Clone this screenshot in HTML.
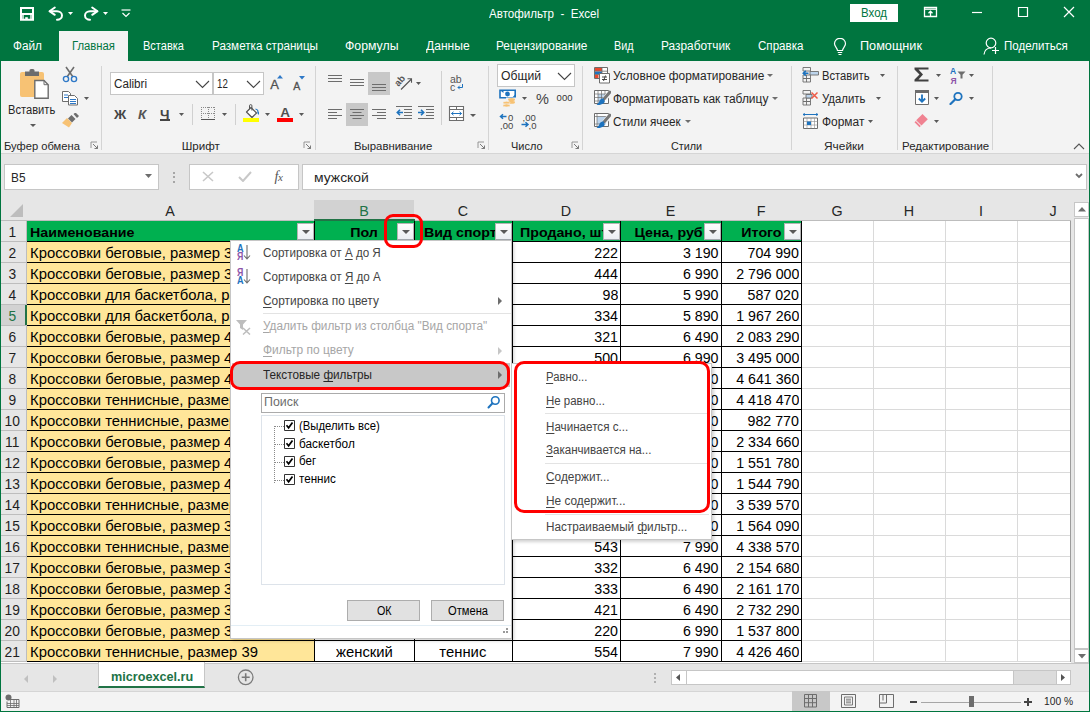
<!DOCTYPE html><html><head><meta charset="utf-8"><title>Excel</title><style>
*{margin:0;padding:0;box-sizing:border-box}
body{width:1090px;height:712px;overflow:hidden;position:relative;background:#fff;font-family:"Liberation Sans",sans-serif;color:#262626}
.a{position:absolute}
.t{position:absolute;white-space:nowrap}
.sep{position:absolute;top:66px;width:1px;height:84px;background:#d4d4d4}
.ch{position:absolute;top:200px;height:21px;background:#e6e6e6;border-right:1px solid #bdbdbd;border-bottom:1px solid #bdbdbd}
.rh{position:absolute;left:1px;width:26px;height:21px;background:#e6e6e6;border-right:1px solid #bdbdbd;border-bottom:1px solid #bdbdbd}
.cell{position:absolute;height:21px;font-size:13.8px;line-height:21px;white-space:nowrap;overflow:hidden;color:#000}
.sl{display:inline-block;transform:scaleX(1.075);transform-origin:0 50%}
.sr{display:inline-block;transform:scaleX(1.03);transform-origin:100% 50%}
.sb{display:inline-block;transform:scaleX(1.07);transform-origin:0 50%;font-size:13.3px}
.sbr{display:inline-block;transform:scaleX(1.07);transform-origin:100% 50%;font-size:13.3px}
u{text-decoration:underline;text-underline-offset:2px;text-decoration-thickness:1px}
</style></head><body>
<div class="a" style="left:0;top:0;width:1090px;height:61px;background:#00753f"></div>
<div class="t" style="left:489.30px;top:8.09px;font-size:12.3px;line-height:12.3px;color:#fff;transform:scaleX(0.9431);transform-origin:0 0;">Автофильтр&nbsp;&nbsp;-&nbsp;&nbsp;Excel</div>
<div class="a" style="left:850px;top:4px;width:48px;height:18px;background:#fff"></div>
<div class="t" style="left:860.90px;top:7.49px;font-size:12.3px;line-height:12.3px;color:#00753f;transform:scaleX(0.9345);transform-origin:0 0;">Вход</div>
<svg class="a" style="left:19px;top:6px" width="16" height="16" viewBox="0 0 16 16"><path d="M2 2H14V13.7H2Z" fill="none" stroke="#fff" stroke-width="2"/><rect x="2" y="7" width="12" height="2" fill="#fff"/><path d="M4 9V13M12 9V13" stroke="#fff" stroke-width="1.4"/><rect x="6.2" y="11.2" width="2.6" height="2.5" fill="#fff"/></svg><svg class="a" style="left:47px;top:5px" width="18" height="17" viewBox="0 0 18 17"><g fill="none" stroke="#fff" stroke-width="2" stroke-linecap="round" stroke-linejoin="round"><path d="M7.8 2.5L2.5 6.2L7.8 9.8"/><path d="M3 6.2H10A5 4.3 0 0 1 10 14.8"/></g></svg><svg class="a" style="left:68px;top:12px" width="5" height="3" viewBox="0 0 5 3"><path d="M0 0H5L2.5 3Z" fill="#fff"/></svg><svg class="a" style="left:82px;top:5px" width="18" height="17" viewBox="0 0 18 17"><g fill="none" stroke="#fff" stroke-width="2" stroke-linecap="round" stroke-linejoin="round"><path d="M10.2 2.5L15.5 6.2L10.2 9.8"/><path d="M15 6.2H8A5 4.3 0 0 0 8 14.8"/></g></svg><svg class="a" style="left:103px;top:12px" width="5" height="3" viewBox="0 0 5 3"><path d="M0 0H5L2.5 3Z" fill="#fff"/></svg><svg class="a" style="left:120px;top:8px" width="12" height="10" viewBox="0 0 12 10"><path d="M1.5 2H10.5" stroke="#fff" stroke-width="1.2"/><path d="M2.5 5L6 8.5L9.5 5" fill="none" stroke="#fff" stroke-width="1.2"/></svg><svg class="a" style="left:923px;top:6px" width="15" height="12" viewBox="0 0 15 12"><g fill="none" stroke="#fff" stroke-width="1.3"><path d="M1.5 1.5H13.5V10.5H1.5Z"/><path d="M1.5 3.2H13.5"/><path d="M7.5 10V5.2M5.5 7.2L7.5 5.2L9.5 7.2"/></g></svg><svg class="a" style="left:971px;top:11px" width="12" height="3" viewBox="0 0 12 3"><path d="M1 1.5H11" stroke="#fff" stroke-width="1.2"/></svg><svg class="a" style="left:1017px;top:6px" width="12" height="12" viewBox="0 0 12 12"><path d="M1.5 1.5H10.5V10.5H1.5Z" fill="none" stroke="#fff" stroke-width="1.2"/></svg><svg class="a" style="left:1063px;top:6px" width="12" height="12" viewBox="0 0 12 12"><path d="M1 1L11 11M11 1L1 11" stroke="#fff" stroke-width="1.2"/></svg><svg class="a" style="left:832px;top:38px" width="16" height="18" viewBox="0 0 16 18"><g fill="none" stroke="#fff" stroke-width="1.2"><path d="M5.5 12.5C5.5 10 2.5 8.5 2.5 5.8A5.5 5.5 0 0 1 13.5 5.8C13.5 8.5 10.5 10 10.5 12.5Z"/><path d="M5.8 14.5H10.2M6.5 16.5H9.5"/></g></svg><svg class="a" style="left:983px;top:37px" width="18" height="19" viewBox="0 0 18 19"><g fill="none" stroke="#fff" stroke-width="1.2"><circle cx="8" cy="6" r="4.8"/><path d="M1 17.5C1.5 13.5 4 11 8 11"/><path d="M12.5 10V17M9 13.5H16"/></g></svg>
<div class="a" style="left:59px;top:31px;width:69px;height:30px;background:#f3f3f3"></div>
<div class="t" style="left:71.50px;top:39.99px;font-size:12.3px;line-height:12.3px;color:#00753f;transform:scaleX(0.9185);transform-origin:0 0;">Главная</div>
<div class="t" style="left:13.00px;top:39.99px;font-size:12.3px;line-height:12.3px;color:#fff;transform:scaleX(0.9588);transform-origin:0 0;">Файл</div>
<div class="t" style="left:142.50px;top:39.99px;font-size:12.3px;line-height:12.3px;color:#fff;transform:scaleX(0.8965);transform-origin:0 0;">Вставка</div>
<div class="t" style="left:211.50px;top:39.99px;font-size:12.3px;line-height:12.3px;color:#fff;transform:scaleX(0.9499);transform-origin:0 0;">Разметка страницы</div>
<div class="t" style="left:345.00px;top:39.99px;font-size:12.3px;line-height:12.3px;color:#fff;">Формулы</div>
<div class="t" style="left:425.80px;top:39.99px;font-size:12.3px;line-height:12.3px;color:#fff;transform:scaleX(0.9811);transform-origin:0 0;">Данные</div>
<div class="t" style="left:496.30px;top:39.99px;font-size:12.3px;line-height:12.3px;color:#fff;transform:scaleX(0.9623);transform-origin:0 0;">Рецензирование</div>
<div class="t" style="left:614.30px;top:39.99px;font-size:12.3px;line-height:12.3px;color:#fff;transform:scaleX(0.8809);transform-origin:0 0;">Вид</div>
<div class="t" style="left:661.30px;top:39.99px;font-size:12.3px;line-height:12.3px;color:#fff;transform:scaleX(0.9652);transform-origin:0 0;">Разработчик</div>
<div class="t" style="left:758.40px;top:39.99px;font-size:12.3px;line-height:12.3px;color:#fff;transform:scaleX(0.9427);transform-origin:0 0;">Справка</div>
<div class="t" style="left:859.60px;top:39.99px;font-size:12.3px;line-height:12.3px;color:#fff;transform:scaleX(1.0298);transform-origin:0 0;">Помощник</div>
<div class="t" style="left:1003.50px;top:39.99px;font-size:12.3px;line-height:12.3px;color:#fff;transform:scaleX(0.9379);transform-origin:0 0;">Поделиться</div>
<div class="a" style="left:0;top:61px;width:1090px;height:93px;background:#f3f3f3;border-bottom:1px solid #d5d5d5"></div>
<div class="sep" style="left:101px"></div>
<div class="sep" style="left:315px"></div>
<div class="sep" style="left:488px"></div>
<div class="sep" style="left:582px"></div>
<div class="sep" style="left:791px"></div>
<div class="sep" style="left:897px"></div>
<div class="sep" style="left:992px"></div>
<div class="t" style="left:3.50px;top:139.68px;font-size:11.6px;line-height:11.6px;color:#262626;transform:scaleX(0.9628);transform-origin:0 0;">Буфер обмена</div>
<div class="t" style="left:181.70px;top:139.68px;font-size:11.6px;line-height:11.6px;color:#262626;">Шрифт</div>
<div class="t" style="left:354.20px;top:139.68px;font-size:11.6px;line-height:11.6px;color:#262626;transform:scaleX(0.9807);transform-origin:0 0;">Выравнивание</div>
<div class="t" style="left:511.00px;top:139.68px;font-size:11.6px;line-height:11.6px;color:#262626;transform:scaleX(0.9442);transform-origin:0 0;">Число</div>
<div class="t" style="left:671.40px;top:139.68px;font-size:11.6px;line-height:11.6px;color:#262626;transform:scaleX(0.9306);transform-origin:0 0;">Стили</div>
<div class="t" style="left:823.90px;top:139.68px;font-size:11.6px;line-height:11.6px;color:#262626;transform:scaleX(1.0255);transform-origin:0 0;">Ячейки</div>
<div class="t" style="left:901.50px;top:139.68px;font-size:11.6px;line-height:11.6px;color:#262626;transform:scaleX(0.9868);transform-origin:0 0;">Редактирование</div>
<div class="t" style="left:8.40px;top:103.79px;font-size:12.3px;line-height:12.3px;color:#262626;transform:scaleX(0.9053);transform-origin:0 0;">Вставить</div>
<div class="a" style="left:110px;top:72px;width:103px;height:23px;background:#fff;border:1px solid #c6c6c6"></div>
<div class="a" style="left:213px;top:72px;width:51px;height:23px;background:#fff;border:1px solid #c6c6c6"></div>
<div class="t" style="left:113.70px;top:78.09px;font-size:12.3px;line-height:12.3px;color:#262626;transform:scaleX(0.9496);transform-origin:0 0;">Calibri</div>
<div class="t" style="left:217.00px;top:78.02px;font-size:12.5px;line-height:12.5px;color:#262626;transform:scaleX(0.7770);transform-origin:0 0;">12</div>
<div class="a" style="left:497px;top:64px;width:78px;height:23px;background:#fff;border:1px solid #c6c6c6"></div>
<div class="t" style="left:500.60px;top:70.39px;font-size:12.3px;line-height:12.3px;color:#262626;transform:scaleX(0.9882);transform-origin:0 0;">Общий</div>
<div class="t" style="left:613.30px;top:70.39px;font-size:12.3px;line-height:12.3px;color:#262626;transform:scaleX(0.9675);transform-origin:0 0;">Условное форматирование</div>
<div class="t" style="left:613.30px;top:93.39px;font-size:12.3px;line-height:12.3px;color:#262626;transform:scaleX(0.9710);transform-origin:0 0;">Форматировать как таблицу</div>
<div class="t" style="left:613.30px;top:116.39px;font-size:12.3px;line-height:12.3px;color:#262626;transform:scaleX(0.9513);transform-origin:0 0;">Стили ячеек</div>
<div class="t" style="left:822.20px;top:70.39px;font-size:12.3px;line-height:12.3px;color:#262626;transform:scaleX(0.9110);transform-origin:0 0;">Вставить</div>
<div class="t" style="left:822.20px;top:93.39px;font-size:12.3px;line-height:12.3px;color:#262626;transform:scaleX(0.9242);transform-origin:0 0;">Удалить</div>
<div class="t" style="left:822.20px;top:116.39px;font-size:12.3px;line-height:12.3px;color:#262626;transform:scaleX(0.9705);transform-origin:0 0;">Формат</div>
<div class="a" style="left:368px;top:72px;width:22px;height:23px;background:#c8c8c8"></div>
<div class="a" style="left:346px;top:103px;width:22px;height:23px;background:#c8c8c8"></div>
<svg class="a" style="left:19px;top:68px" width="30" height="32" viewBox="0 0 30 32"><rect x="1" y="4" width="24" height="25" rx="2" fill="#f7c274"/><path d="M6 3.5H20V8H6Z" fill="#6d6d6d"/><rect x="10.5" y="1" width="5" height="4" rx="1.5" fill="#6d6d6d"/><path d="M15.8 12.5H25L29.2 16.7V30.2H15.8Z" fill="#fff" stroke="#6d6d6d" stroke-width="1.4"/><path d="M25 12.5V16.7H29.2" fill="none" stroke="#6d6d6d" stroke-width="1"/></svg><svg class="a" style="left:30px;top:124px" width="6" height="3" viewBox="0 0 6 3"><path d="M0 0H6L3.0 3Z" fill="#595959"/></svg><svg class="a" style="left:62px;top:66px" width="16" height="17" viewBox="0 0 16 17"><path d="M4 1L11 11M12 1L5 11" stroke="#6d6d6d" stroke-width="1.6"/><circle cx="4" cy="13" r="2.6" fill="none" stroke="#2e78c7" stroke-width="1.4"/><circle cx="12" cy="13" r="2.6" fill="none" stroke="#2e78c7" stroke-width="1.4"/></svg><svg class="a" style="left:61px;top:90px" width="18" height="16" viewBox="0 0 18 16"><path d="M1.5 1.5H7.5L9.5 3.5V11.5H1.5Z" fill="#fff" stroke="#6d6d6d" stroke-width="1"/><path d="M3 5H7M3 7.5H7" stroke="#2e78c7" stroke-width="1"/><path d="M7.5 5.5H13.5L16.5 8.5V15H7.5Z" fill="#fff" stroke="#6d6d6d" stroke-width="1"/><path d="M9 9.5H15M9 11.5H15M9 13.5H15" stroke="#2e78c7" stroke-width="1"/></svg><svg class="a" style="left:84px;top:97px" width="5" height="3" viewBox="0 0 5 3"><path d="M0 0H5L2.5 3Z" fill="#595959"/></svg><svg class="a" style="left:61px;top:113px" width="18" height="16" viewBox="0 0 18 16"><path d="M1 10L6 5L11 10L8 14.5Z" fill="#f7c274"/><path d="M7 5.5L10.5 2L14.5 6L11 9.5Z" fill="#6d6d6d"/><path d="M12.5 1L14.5 -0.5L18 3L16 5Z" fill="#6d6d6d"/></svg><svg class="a" style="left:195px;top:80px" width="15" height="9" viewBox="0 0 15 9"><path d="M1 1L7.5 7.5L14 1" fill="none" stroke="#444" stroke-width="1.1"/></svg><svg class="a" style="left:246px;top:80px" width="15" height="9" viewBox="0 0 15 9"><path d="M1 1L7.5 7.5L14 1" fill="none" stroke="#444" stroke-width="1.1"/></svg><div class="t" style="left:270.3px;top:78.3px;font-size:13px;line-height:13px;color:#505050;-webkit-text-stroke:0.3px #505050">A</div><svg class="a" style="left:277px;top:75px" width="6" height="4" viewBox="0 0 6 4"><path d="M0 3.5H6L3 0Z" fill="#2e78c7"/></svg><div class="t" style="left:293.2px;top:80.5px;font-size:10.5px;line-height:10.5px;color:#505050;-webkit-text-stroke:0.3px #505050">A</div><svg class="a" style="left:299px;top:76px" width="6" height="4" viewBox="0 0 6 4"><path d="M0 0H6L3 3.5Z" fill="#2e78c7"/></svg><div class="t" style="left:114px;top:107px;font-size:13.5px;font-weight:bold;color:#444">Ж</div><div class="t" style="left:138px;top:107px;font-size:13.5px;font-weight:bold;font-style:italic;color:#555">К</div><div class="t" style="left:160px;top:107px;font-size:13.5px;font-weight:bold;color:#444">Ч</div><div class="a" style="left:160px;top:119px;width:10px;height:1.5px;background:#444"></div><svg class="a" style="left:179px;top:113px" width="5" height="3" viewBox="0 0 5 3"><path d="M0 0H5L2.5 3Z" fill="#595959"/></svg><div class="a" style="left:192px;top:104px;width:1px;height:21px;background:#d0d0d0"></div><svg class="a" style="left:200px;top:106px" width="16" height="15" viewBox="0 0 16 15"><g shape-rendering="crispEdges"><path d="M1.5 1V13M8 1V13M14.5 1V13M1 1.5H15M1 7.5H15" stroke="#8a8a8a" stroke-width="1" stroke-dasharray="1 1"/><path d="M1 13.5H15" stroke="#555" stroke-width="1"/></g></svg><svg class="a" style="left:222px;top:113px" width="5" height="3" viewBox="0 0 5 3"><path d="M0 0H5L2.5 3Z" fill="#595959"/></svg><div class="a" style="left:235px;top:104px;width:1px;height:21px;background:#d0d0d0"></div><svg class="a" style="left:243px;top:104px" width="18" height="14" viewBox="0 0 18 14"><path d="M8 3.5L13.5 9L9 13.5L3.5 8Z" fill="#fff" stroke="#555" stroke-width="1.2" stroke-linejoin="round"/><path d="M6.5 5V1.8A1.2 1.2 0 0 1 8.9 1.8V6.5" fill="none" stroke="#555" stroke-width="1"/><path d="M14.5 6.5C16 7.5 16.5 9 15.5 11C14.5 9.5 14 8 14.5 6.5Z" fill="#1e73be"/><path d="M12.5 5C14 5.3 14.8 6 15 7" fill="none" stroke="#1e73be" stroke-width="1.2"/></svg><div class="a" style="left:243px;top:118px;width:16px;height:3.5px;background:#ffff00"></div><svg class="a" style="left:265px;top:113px" width="5" height="3" viewBox="0 0 5 3"><path d="M0 0H5L2.5 3Z" fill="#595959"/></svg><div class="t" style="left:280.3px;top:106.2px;font-size:13.5px;line-height:13.5px;font-weight:bold;color:#505050">A</div><div class="a" style="left:277px;top:118px;width:16px;height:3.5px;background:#ff0000"></div><svg class="a" style="left:299px;top:113px" width="5" height="3" viewBox="0 0 5 3"><path d="M0 0H5L2.5 3Z" fill="#595959"/></svg><svg class="a" style="left:328px;top:75px" width="14" height="11" viewBox="0 0 14 11"><rect x="0" y="0" width="14" height="1" fill="#6d6d6d"/><rect x="0" y="3" width="14" height="1" fill="#6d6d6d"/><rect x="0" y="6" width="14" height="1" fill="#6d6d6d"/></svg><svg class="a" style="left:350px;top:79px" width="14" height="11" viewBox="0 0 14 11"><rect x="0" y="0" width="14" height="1" fill="#6d6d6d"/><rect x="0" y="3" width="14" height="1" fill="#6d6d6d"/><rect x="0" y="6" width="14" height="1" fill="#6d6d6d"/></svg><svg class="a" style="left:372px;top:84px" width="14" height="11" viewBox="0 0 14 11"><rect x="0" y="0" width="14" height="1" fill="#6d6d6d"/><rect x="0" y="3" width="14" height="1" fill="#6d6d6d"/><rect x="0" y="6" width="14" height="1" fill="#6d6d6d"/></svg><svg class="a" style="left:328px;top:109px" width="14" height="14" viewBox="0 0 14 14"><rect x="0" y="0" width="14" height="1" fill="#6d6d6d"/><rect x="0" y="3" width="9" height="1" fill="#6d6d6d"/><rect x="0" y="6" width="14" height="1" fill="#6d6d6d"/><rect x="0" y="9" width="9" height="1" fill="#6d6d6d"/></svg><svg class="a" style="left:350px;top:109px" width="14" height="14" viewBox="0 0 14 14"><rect x="0.0" y="0" width="14" height="1" fill="#6d6d6d"/><rect x="2.5" y="3" width="9" height="1" fill="#6d6d6d"/><rect x="0.0" y="6" width="14" height="1" fill="#6d6d6d"/><rect x="2.5" y="9" width="9" height="1" fill="#6d6d6d"/></svg><svg class="a" style="left:372px;top:109px" width="14" height="14" viewBox="0 0 14 14"><rect x="0" y="0" width="14" height="1" fill="#6d6d6d"/><rect x="5" y="3" width="9" height="1" fill="#6d6d6d"/><rect x="0" y="6" width="14" height="1" fill="#6d6d6d"/><rect x="5" y="9" width="9" height="1" fill="#6d6d6d"/></svg><svg class="a" style="left:395px;top:74px" width="19" height="17" viewBox="0 0 19 17"><text x="0" y="0" font-size="9.5" font-weight="bold" font-family="Liberation Sans" fill="#555" transform="translate(3.5 13) rotate(-50)">ab</text><path d="M6 15.5L16 5.5M12.5 4.8H16.5V8.8" fill="none" stroke="#555" stroke-width="1.1"/></svg><svg class="a" style="left:416px;top:82px" width="5" height="3" viewBox="0 0 5 3"><path d="M0 0H5L2.5 3Z" fill="#595959"/></svg><svg class="a" style="left:396px;top:106px" width="17" height="14" viewBox="0 0 17 14"><rect x="0" y="0" width="16" height="1" fill="#6d6d6d"/><rect x="8" y="3" width="8" height="1" fill="#6d6d6d"/><rect x="8" y="6" width="8" height="1" fill="#6d6d6d"/><rect x="8" y="9" width="8" height="1" fill="#6d6d6d"/><rect x="0" y="12" width="16" height="1" fill="#6d6d6d"/><path d="M7 6.5H1.5M4 3.8L1.3 6.5L4 9.2" fill="none" stroke="#1e73be" stroke-width="1.6"/></svg><svg class="a" style="left:418px;top:106px" width="17" height="14" viewBox="0 0 17 14"><rect x="0" y="0" width="16" height="1" fill="#6d6d6d"/><rect x="8" y="3" width="8" height="1" fill="#6d6d6d"/><rect x="8" y="6" width="8" height="1" fill="#6d6d6d"/><rect x="8" y="9" width="8" height="1" fill="#6d6d6d"/><rect x="0" y="12" width="16" height="1" fill="#6d6d6d"/><path d="M0 6.5H5.5M3 3.8L5.7 6.5L3 9.2" fill="none" stroke="#1e73be" stroke-width="1.6"/></svg><div class="a" style="left:441px;top:71px;width:1px;height:54px;background:#d0d0d0"></div><div class="t" style="left:450px;top:75px;font-size:10.5px;color:#555;line-height:8px">ab<br>c</div><svg class="a" style="left:457px;top:84px" width="7" height="6" viewBox="0 0 7 6"><path d="M5.5 0V3.5H1M2.8 1.7L1 3.5L2.8 5.3" fill="none" stroke="#1e73be" stroke-width="1"/></svg><svg class="a" style="left:448px;top:105px" width="17" height="17" viewBox="0 0 17 17"><path d="M1.5 1.5H15.5V15.5H1.5Z" fill="#fff" stroke="#6d6d6d" stroke-width="1.1"/><path d="M1.5 4.5H15.5M1.5 12.5H15.5M8.5 1.5V4.5M8.5 12.5V15.5" stroke="#6d6d6d" stroke-width="1"/><path d="M3.5 8.5H13.5M5.5 6.8L3.5 8.5L5.5 10.2M11.5 6.8L13.5 8.5L11.5 10.2" fill="none" stroke="#1e73be" stroke-width="1"/></svg><svg class="a" style="left:470px;top:114px" width="6" height="3" viewBox="0 0 6 3"><path d="M0 0H6L3.0 3Z" fill="#595959"/></svg><svg class="a" style="left:557px;top:72px" width="15" height="9" viewBox="0 0 15 9"><path d="M1 1L7.5 7.5L14 1" fill="none" stroke="#444" stroke-width="1.1"/></svg><svg class="a" style="left:499px;top:89px" width="18" height="18" viewBox="0 0 18 18"><path d="M1 1.2H16.2V8.8H1Z" fill="#fff" stroke="#1e73be" stroke-width="1.6"/><path d="M1 1.2H4.5V4M16.2 5.5V8.8H13" fill="#1e73be"/><circle cx="8.5" cy="5" r="2.4" fill="#1e73be"/><rect x="7" y="8.5" width="10" height="9" fill="#f3f3f3"/><ellipse cx="12.5" cy="10.5" rx="3.5" ry="1.5" fill="#f7c274"/><ellipse cx="12.5" cy="13.2" rx="3.5" ry="1.5" fill="#f7c274"/><ellipse cx="7.5" cy="13.8" rx="3.5" ry="1.5" fill="#f7c274" stroke="#f3f3f3" stroke-width="0.6"/><ellipse cx="7.5" cy="16.4" rx="3.5" ry="1.5" fill="#f7c274" stroke="#f3f3f3" stroke-width="0.6"/></svg><svg class="a" style="left:522px;top:97px" width="5" height="3" viewBox="0 0 5 3"><path d="M0 0H5L2.5 3Z" fill="#595959"/></svg><div class="t" style="left:536px;top:92px;font-size:14.5px;line-height:14.5px;color:#444">%</div><div class="t" style="left:556.5px;top:93px;font-size:9.5px;line-height:9.5px;color:#333;letter-spacing:0.1px">000</div><svg class="a" style="left:499px;top:112px" width="18" height="18" viewBox="0 0 18 18"><path d="M7.5 4.5H1.8M4 2.2L1.5 4.5L4 6.8" fill="none" stroke="#1e73be" stroke-width="1.5"/><text x="9" y="8.8" font-size="9.5" font-family="Liberation Sans" fill="#444">0</text><text x="1" y="16.5" font-size="9.5" font-family="Liberation Sans" fill="#444">,00</text></svg><svg class="a" style="left:521px;top:112px" width="18" height="18" viewBox="0 0 18 18"><text x="1.5" y="8.8" font-size="9.5" font-family="Liberation Sans" fill="#444">,00</text><path d="M0.5 12.5H6.8M4.5 10.2L7 12.5L4.5 14.8" fill="none" stroke="#1e73be" stroke-width="1.5"/><text x="7.5" y="16.5" font-size="9.5" font-family="Liberation Sans" fill="#444">,0</text></svg><svg class="a" style="left:593px;top:66px" width="18" height="18" viewBox="0 0 18 18"><path d="M1.5 1.5H14.5V12.5H1.5Z" fill="#fff" stroke="#6d6d6d" stroke-width="1"/><rect x="2" y="2" width="7" height="3.2" fill="#e8492e"/><rect x="2" y="5.5" width="7" height="2.8" fill="#1e73be"/><rect x="2" y="8.5" width="3.5" height="3.5" fill="#e8492e"/><path d="M9 1.5V12.5M1.5 5.2H14.5M1.5 8.5H14.5" stroke="#6d6d6d" stroke-width="0.8"/><path d="M6.5 7.5H16.5V17H6.5Z" fill="#fff" stroke="#6d6d6d" stroke-width="1"/><path d="M9 11H14M9 13.5H14M12.5 9.5L10.5 15" stroke="#333" stroke-width="0.9"/></svg><svg class="a" style="left:593px;top:89px" width="18" height="17" viewBox="0 0 18 17"><path d="M1.5 1.5H15.5V14.5H1.5Z" fill="#fff" stroke="#6d6d6d" stroke-width="1"/><rect x="5" y="5" width="7" height="7" fill="#bcd4ec"/><path d="M1.5 5H15.5M1.5 8.5H15.5M1.5 12H12M5 1.5V14.5M8.5 1.5V12M12 1.5V8" stroke="#6d6d6d" stroke-width="0.7"/><path d="M17 3.5L11.5 10" stroke="#f3f3f3" stroke-width="5"/><path d="M16.8 3.2L11.2 9.8" stroke="#777" stroke-width="3" stroke-linecap="round"/><path d="M10.5 9.3C8 9.5 7 11 6.3 12.5C5.5 14 4.5 15.2 3.5 16C6.5 16.3 10 15.5 11.8 13Z" fill="#1e73be"/></svg><svg class="a" style="left:593px;top:112px" width="18" height="17" viewBox="0 0 18 17"><path d="M1.5 1.5H15.5V14.5H1.5Z" fill="#fff" stroke="#6d6d6d" stroke-width="1"/><rect x="4" y="4.5" width="9" height="8" fill="#bcd4ec"/><path d="M1.5 4.5H15.5M4 1.5V14.5M1.5 12H10" stroke="#6d6d6d" stroke-width="0.7"/><path d="M17 3.5L11.5 10" stroke="#f3f3f3" stroke-width="5"/><path d="M16.8 3.2L11.2 9.8" stroke="#777" stroke-width="3" stroke-linecap="round"/><path d="M10.5 9.3C8 9.5 7 11 6.3 12.5C5.5 14 4.5 15.2 3.5 16C6.5 16.3 10 15.5 11.8 13Z" fill="#1e73be"/></svg><svg class="a" style="left:767px;top:74px" width="6" height="4" viewBox="0 0 6 4"><path d="M0 0H6L3 3Z" fill="#6d6d6d"/></svg><svg class="a" style="left:772px;top:97px" width="6" height="4" viewBox="0 0 6 4"><path d="M0 0H6L3 3Z" fill="#6d6d6d"/></svg><svg class="a" style="left:685px;top:120px" width="6" height="4" viewBox="0 0 6 4"><path d="M0 0H6L3 3Z" fill="#6d6d6d"/></svg><svg class="a" style="left:802px;top:66px" width="18" height="18" viewBox="0 0 18 18"><path d="M1 1.5H8.5V5H1ZM1 9H8.5V12.5H1ZM1 12.5H8.5V16H1ZM4.5 9V16" fill="none" stroke="#6d6d6d" stroke-width="0.9"/><path d="M8 5.5H16.5V9H8Z" fill="#bcd4ec" stroke="#6d6d6d" stroke-width="0.9"/><path d="M6.5 7.2H1.5M3.8 4.8L1.3 7.2L3.8 9.6" fill="none" stroke="#1e73be" stroke-width="1.6"/></svg><svg class="a" style="left:880px;top:74px" width="5" height="3" viewBox="0 0 5 3"><path d="M0 0H5L2.5 3Z" fill="#595959"/></svg><svg class="a" style="left:802px;top:89px" width="18" height="18" viewBox="0 0 18 18"><path d="M1 1.5H8.5V5H1ZM1 9H8.5V12.5H1ZM1 12.5H8.5V16H1ZM4.5 9V16" fill="none" stroke="#6d6d6d" stroke-width="0.9"/><path d="M4 5.5H10V9H4Z" fill="#bcd4ec" stroke="#6d6d6d" stroke-width="0.9"/><path d="M9.5 3.5L15.5 9.5M15.5 3.5L9.5 9.5" stroke="#ee5a47" stroke-width="1.5"/></svg><svg class="a" style="left:876px;top:97px" width="5" height="3" viewBox="0 0 5 3"><path d="M0 0H5L2.5 3Z" fill="#595959"/></svg><svg class="a" style="left:802px;top:112px" width="18" height="18" viewBox="0 0 18 18"><path d="M1 2.5H16M2.2 1V4M14.8 1V4" stroke="#1e73be" stroke-width="1"/><path d="M3.8 2.5L2 2.5" stroke="#1e73be"/><path d="M1.5 6H15.5V16.5H1.5Z" fill="#fff" stroke="#6d6d6d" stroke-width="1"/><path d="M1.5 9.5H15.5M1.5 13H15.5M5 6V16.5M9 6V16.5M12.5 6V16.5" stroke="#8d8d8d" stroke-width="0.6"/><rect x="5" y="9.5" width="4" height="3.5" fill="#1e73be"/></svg><svg class="a" style="left:868px;top:120px" width="5" height="3" viewBox="0 0 5 3"><path d="M0 0H5L2.5 3Z" fill="#595959"/></svg><svg class="a" style="left:913px;top:66px" width="18" height="17" viewBox="0 0 18 17"><path d="M1.5 1.5H15.5V3.5H5.5L10 8.5L5.5 13.5H15.5V15.5H1.5V13.5L6.5 8.5L1.5 3.5Z" fill="#404040"/></svg><svg class="a" style="left:936px;top:74px" width="5" height="3" viewBox="0 0 5 3"><path d="M0 0H5L2.5 3Z" fill="#595959"/></svg><div class="t" style="left:950px;top:66px;font-size:8.5px;font-weight:bold;color:#1e73be">A</div><div class="t" style="left:950.5px;top:75.5px;font-size:8.5px;font-weight:bold;color:#8c54a8">Я</div><svg class="a" style="left:957px;top:71px" width="9" height="8" viewBox="0 0 9 8"><path d="M0.5 0.5H8.5L5.5 3.8V7.5H3.5V3.8Z" fill="#6d6d6d"/></svg><svg class="a" style="left:969px;top:74px" width="5" height="3" viewBox="0 0 5 3"><path d="M0 0H5L2.5 3Z" fill="#595959"/></svg><svg class="a" style="left:914px;top:89px" width="16" height="17" viewBox="0 0 16 17"><path d="M1.5 1.5H14.5V15.5H1.5Z" fill="#fff" stroke="#6d6d6d" stroke-width="1"/><rect x="1" y="1" width="14" height="3" fill="#6d6d6d"/><path d="M8 5.5V13M4.8 9.5L8 12.7L11.2 9.5" fill="none" stroke="#1e73be" stroke-width="1.8"/></svg><svg class="a" style="left:934px;top:97px" width="5" height="3" viewBox="0 0 5 3"><path d="M0 0H5L2.5 3Z" fill="#595959"/></svg><svg class="a" style="left:949px;top:91px" width="15" height="14" viewBox="0 0 15 14"><circle cx="9" cy="5.5" r="3.7" fill="none" stroke="#1e73be" stroke-width="1.8"/><path d="M6.3 8.2L1.5 13" stroke="#1e73be" stroke-width="2.2" stroke-linecap="round"/></svg><svg class="a" style="left:969px;top:97px" width="5" height="3" viewBox="0 0 5 3"><path d="M0 0H5L2.5 3Z" fill="#595959"/></svg><svg class="a" style="left:914px;top:113px" width="15" height="15" viewBox="0 0 15 15"><path d="M8.5 1L13.8 6.3L7.5 12.6L2.2 7.3Z" fill="#f08291"/><path d="M1.8 8L6.8 13L5.5 14.3L0.5 9.3Z" fill="#f08291"/></svg><svg class="a" style="left:934px;top:120px" width="5" height="3" viewBox="0 0 5 3"><path d="M0 0H5L2.5 3Z" fill="#595959"/></svg><svg class="a" style="left:1073px;top:143px" width="12" height="7" viewBox="0 0 12 7"><path d="M1 6L6 1L11 6" fill="none" stroke="#555" stroke-width="1.1"/></svg><svg class="a" style="left:90px;top:141px" width="9" height="9" viewBox="0 0 9 9"><path d="M1 7V1H7" fill="none" stroke="#8d8d8d" stroke-width="0.9"/><path d="M3 3L7.5 7.5M4.5 7.5H7.5V4.5" fill="none" stroke="#6d6d6d" stroke-width="0.9"/></svg><svg class="a" style="left:303px;top:141px" width="9" height="9" viewBox="0 0 9 9"><path d="M1 7V1H7" fill="none" stroke="#8d8d8d" stroke-width="0.9"/><path d="M3 3L7.5 7.5M4.5 7.5H7.5V4.5" fill="none" stroke="#6d6d6d" stroke-width="0.9"/></svg><svg class="a" style="left:477px;top:141px" width="9" height="9" viewBox="0 0 9 9"><path d="M1 7V1H7" fill="none" stroke="#8d8d8d" stroke-width="0.9"/><path d="M3 3L7.5 7.5M4.5 7.5H7.5V4.5" fill="none" stroke="#6d6d6d" stroke-width="0.9"/></svg><svg class="a" style="left:571px;top:141px" width="9" height="9" viewBox="0 0 9 9"><path d="M1 7V1H7" fill="none" stroke="#8d8d8d" stroke-width="0.9"/><path d="M3 3L7.5 7.5M4.5 7.5H7.5V4.5" fill="none" stroke="#6d6d6d" stroke-width="0.9"/></svg>
<div class="a" style="left:0;top:154px;width:1090px;height:46px;background:#e6e6e6"></div>
<div class="a" style="left:4px;top:164px;width:155px;height:26px;background:#fff;border:1px solid #c6c6c6"></div>
<div class="t" style="left:10.50px;top:171.72px;font-size:12.5px;line-height:12.5px;color:#262626;transform:scaleX(0.9485);transform-origin:0 0;">B5</div>
<svg class="a" style="left:145px;top:174px" width="7" height="4" viewBox="0 0 7 4"><path d="M0 0H7L3.5 4Z" fill="#6d6d6d"/></svg>
<div class="a" style="left:173px;top:172px;width:2px;height:2px;background:#a6a6a6"></div>
<div class="a" style="left:173px;top:176.3px;width:2px;height:2px;background:#a6a6a6"></div>
<div class="a" style="left:173px;top:180.6px;width:2px;height:2px;background:#a6a6a6"></div>
<div class="a" style="left:189px;top:164px;width:110px;height:26px;background:#fff;border:1px solid #c6c6c6"></div>
<svg class="a" style="left:202px;top:171px" width="12" height="11" viewBox="0 0 12 11"><path d="M1 1L11 10M11 1L1 10" stroke="#c8c8c8" stroke-width="1.6"/></svg>
<svg class="a" style="left:238px;top:171px" width="14" height="11" viewBox="0 0 14 11"><path d="M1 6L5 10L13 1" fill="none" stroke="#c8c8c8" stroke-width="2"/></svg>
<div class="t" style="left:274.5px;top:169.5px;font-family:'Liberation Serif',serif;font-style:italic;font-size:14px;line-height:14px;color:#555">f<span style="font-size:11px;margin-left:-0.5px">x</span></div>
<div class="a" style="left:302px;top:164px;width:785px;height:26px;background:#fff;border:1px solid #c6c6c6"></div>
<div class="t" style="left:314.10px;top:171.76px;font-size:12.8px;line-height:12.8px;color:#262626;transform:scaleX(1.0880);transform-origin:0 0;">мужской</div>
<svg class="a" style="left:1075px;top:173px" width="8" height="6" viewBox="0 0 8 6"><path d="M1 1L4 4L7 1" fill="none" stroke="#6d6d6d" stroke-width="1.8"/></svg>
<div class="a" style="left:1px;top:200px;width:26px;height:21px;background:#e6e6e6;border-right:1px solid #bdbdbd;border-bottom:1px solid #bdbdbd"></div>
<svg class="a" style="left:9px;top:203px" width="15" height="15" viewBox="0 0 15 15"><path d="M14 1V14H1Z" fill="#bdbdbd"/></svg>
<div class="ch" style="left:26px;width:289px;background:#e6e6e6"></div>
<div class="t" style="left:26px;width:288px;top:203.70px;font-size:14.3px;line-height:14.3px;text-align:center;color:#262626">A</div>
<div class="ch" style="left:314px;width:101px;background:#d2d2d2"></div>
<div class="t" style="left:314px;width:100px;top:203.70px;font-size:14.3px;line-height:14.3px;text-align:center;color:#217346">B</div>
<div class="ch" style="left:414px;width:99px;background:#e6e6e6"></div>
<div class="t" style="left:414px;width:98px;top:203.70px;font-size:14.3px;line-height:14.3px;text-align:center;color:#262626">C</div>
<div class="ch" style="left:512px;width:109px;background:#e6e6e6"></div>
<div class="t" style="left:512px;width:108px;top:203.70px;font-size:14.3px;line-height:14.3px;text-align:center;color:#262626">D</div>
<div class="ch" style="left:620px;width:102px;background:#e6e6e6"></div>
<div class="t" style="left:620px;width:101px;top:203.70px;font-size:14.3px;line-height:14.3px;text-align:center;color:#262626">E</div>
<div class="ch" style="left:721px;width:81px;background:#e6e6e6"></div>
<div class="t" style="left:721px;width:80px;top:203.70px;font-size:14.3px;line-height:14.3px;text-align:center;color:#262626">F</div>
<div class="ch" style="left:801px;width:73px;background:#e6e6e6"></div>
<div class="t" style="left:801px;width:72px;top:203.70px;font-size:14.3px;line-height:14.3px;text-align:center;color:#262626">G</div>
<div class="ch" style="left:873px;width:73px;background:#e6e6e6"></div>
<div class="t" style="left:873px;width:72px;top:203.70px;font-size:14.3px;line-height:14.3px;text-align:center;color:#262626">H</div>
<div class="ch" style="left:945px;width:73px;background:#e6e6e6"></div>
<div class="t" style="left:945px;width:72px;top:203.70px;font-size:14.3px;line-height:14.3px;text-align:center;color:#262626">I</div>
<div class="ch" style="left:1017px;width:73px;background:#e6e6e6"></div>
<div class="t" style="left:1017px;width:72px;top:203.70px;font-size:14.3px;line-height:14.3px;text-align:center;color:#262626">J</div>
<div class="a" style="left:314px;top:219px;width:101px;height:2px;background:#217346"></div>
<div class="rh" style="top:221px;"></div>
<div class="t" style="left:0px;width:24.5px;top:225.52px;font-size:13.8px;line-height:13.8px;text-align:center;color:#1f1f1f">1</div>
<div class="rh" style="top:242px;"></div>
<div class="t" style="left:0px;width:24.5px;top:246.52px;font-size:13.8px;line-height:13.8px;text-align:center;color:#1f1f1f">2</div>
<div class="rh" style="top:263px;"></div>
<div class="t" style="left:0px;width:24.5px;top:267.52px;font-size:13.8px;line-height:13.8px;text-align:center;color:#1f1f1f">3</div>
<div class="rh" style="top:284px;"></div>
<div class="t" style="left:0px;width:24.5px;top:288.52px;font-size:13.8px;line-height:13.8px;text-align:center;color:#1f1f1f">4</div>
<div class="rh" style="top:305px;background:#d2d2d2"></div>
<div class="t" style="left:0px;width:24.5px;top:309.52px;font-size:13.8px;line-height:13.8px;text-align:center;color:#217346">5</div>
<div class="rh" style="top:326px;"></div>
<div class="t" style="left:0px;width:24.5px;top:330.52px;font-size:13.8px;line-height:13.8px;text-align:center;color:#1f1f1f">6</div>
<div class="rh" style="top:347px;"></div>
<div class="t" style="left:0px;width:24.5px;top:351.52px;font-size:13.8px;line-height:13.8px;text-align:center;color:#1f1f1f">7</div>
<div class="rh" style="top:368px;"></div>
<div class="t" style="left:0px;width:24.5px;top:372.52px;font-size:13.8px;line-height:13.8px;text-align:center;color:#1f1f1f">8</div>
<div class="rh" style="top:389px;"></div>
<div class="t" style="left:0px;width:24.5px;top:393.52px;font-size:13.8px;line-height:13.8px;text-align:center;color:#1f1f1f">9</div>
<div class="rh" style="top:410px;"></div>
<div class="t" style="left:0px;width:24.5px;top:414.52px;font-size:13.8px;line-height:13.8px;text-align:center;color:#1f1f1f">10</div>
<div class="rh" style="top:431px;"></div>
<div class="t" style="left:0px;width:24.5px;top:435.52px;font-size:13.8px;line-height:13.8px;text-align:center;color:#1f1f1f">11</div>
<div class="rh" style="top:452px;"></div>
<div class="t" style="left:0px;width:24.5px;top:456.52px;font-size:13.8px;line-height:13.8px;text-align:center;color:#1f1f1f">12</div>
<div class="rh" style="top:473px;"></div>
<div class="t" style="left:0px;width:24.5px;top:477.52px;font-size:13.8px;line-height:13.8px;text-align:center;color:#1f1f1f">13</div>
<div class="rh" style="top:494px;"></div>
<div class="t" style="left:0px;width:24.5px;top:498.52px;font-size:13.8px;line-height:13.8px;text-align:center;color:#1f1f1f">14</div>
<div class="rh" style="top:515px;"></div>
<div class="t" style="left:0px;width:24.5px;top:519.52px;font-size:13.8px;line-height:13.8px;text-align:center;color:#1f1f1f">15</div>
<div class="rh" style="top:536px;"></div>
<div class="t" style="left:0px;width:24.5px;top:540.52px;font-size:13.8px;line-height:13.8px;text-align:center;color:#1f1f1f">16</div>
<div class="rh" style="top:557px;"></div>
<div class="t" style="left:0px;width:24.5px;top:561.52px;font-size:13.8px;line-height:13.8px;text-align:center;color:#1f1f1f">17</div>
<div class="rh" style="top:578px;"></div>
<div class="t" style="left:0px;width:24.5px;top:582.52px;font-size:13.8px;line-height:13.8px;text-align:center;color:#1f1f1f">18</div>
<div class="rh" style="top:599px;"></div>
<div class="t" style="left:0px;width:24.5px;top:603.52px;font-size:13.8px;line-height:13.8px;text-align:center;color:#1f1f1f">19</div>
<div class="rh" style="top:620px;"></div>
<div class="t" style="left:0px;width:24.5px;top:624.52px;font-size:13.8px;line-height:13.8px;text-align:center;color:#1f1f1f">20</div>
<div class="rh" style="top:641px;"></div>
<div class="t" style="left:0px;width:24.5px;top:645.52px;font-size:13.8px;line-height:13.8px;text-align:center;color:#1f1f1f">21</div>
<div class="a" style="left:25px;top:305px;width:2px;height:20px;background:#217346"></div>
<div class="a" style="left:873px;top:221px;width:1px;height:441px;background:#dadada"></div>
<div class="a" style="left:945px;top:221px;width:1px;height:441px;background:#dadada"></div>
<div class="a" style="left:1017px;top:221px;width:1px;height:441px;background:#dadada"></div>
<div class="a" style="left:801px;top:241px;width:270px;height:1px;background:#dadada"></div>
<div class="a" style="left:801px;top:262px;width:270px;height:1px;background:#dadada"></div>
<div class="a" style="left:801px;top:283px;width:270px;height:1px;background:#dadada"></div>
<div class="a" style="left:801px;top:304px;width:270px;height:1px;background:#dadada"></div>
<div class="a" style="left:801px;top:325px;width:270px;height:1px;background:#dadada"></div>
<div class="a" style="left:801px;top:346px;width:270px;height:1px;background:#dadada"></div>
<div class="a" style="left:801px;top:367px;width:270px;height:1px;background:#dadada"></div>
<div class="a" style="left:801px;top:388px;width:270px;height:1px;background:#dadada"></div>
<div class="a" style="left:801px;top:409px;width:270px;height:1px;background:#dadada"></div>
<div class="a" style="left:801px;top:430px;width:270px;height:1px;background:#dadada"></div>
<div class="a" style="left:801px;top:451px;width:270px;height:1px;background:#dadada"></div>
<div class="a" style="left:801px;top:472px;width:270px;height:1px;background:#dadada"></div>
<div class="a" style="left:801px;top:493px;width:270px;height:1px;background:#dadada"></div>
<div class="a" style="left:801px;top:514px;width:270px;height:1px;background:#dadada"></div>
<div class="a" style="left:801px;top:535px;width:270px;height:1px;background:#dadada"></div>
<div class="a" style="left:801px;top:556px;width:270px;height:1px;background:#dadada"></div>
<div class="a" style="left:801px;top:577px;width:270px;height:1px;background:#dadada"></div>
<div class="a" style="left:801px;top:598px;width:270px;height:1px;background:#dadada"></div>
<div class="a" style="left:801px;top:619px;width:270px;height:1px;background:#dadada"></div>
<div class="a" style="left:801px;top:640px;width:270px;height:1px;background:#dadada"></div>
<div class="a" style="left:801px;top:661px;width:270px;height:1px;background:#dadada"></div>
<div class="a" style="left:1070px;top:221px;width:1px;height:441px;background:#9b9b9b"></div>
<div class="a" style="left:27px;top:221px;width:774px;height:20px;background:#00b050"></div>
<div class="a" style="left:27px;top:242px;width:287px;height:20px;background:#ffe699"></div>
<div class="a" style="left:27px;top:263px;width:287px;height:20px;background:#ffe699"></div>
<div class="a" style="left:27px;top:284px;width:287px;height:20px;background:#ffe699"></div>
<div class="a" style="left:27px;top:305px;width:287px;height:20px;background:#ffe699"></div>
<div class="a" style="left:27px;top:326px;width:287px;height:20px;background:#ffe699"></div>
<div class="a" style="left:27px;top:347px;width:287px;height:20px;background:#ffe699"></div>
<div class="a" style="left:27px;top:368px;width:287px;height:20px;background:#ffe699"></div>
<div class="a" style="left:27px;top:389px;width:287px;height:20px;background:#ffe699"></div>
<div class="a" style="left:27px;top:410px;width:287px;height:20px;background:#ffe699"></div>
<div class="a" style="left:27px;top:431px;width:287px;height:20px;background:#ffe699"></div>
<div class="a" style="left:27px;top:452px;width:287px;height:20px;background:#ffe699"></div>
<div class="a" style="left:27px;top:473px;width:287px;height:20px;background:#ffe699"></div>
<div class="a" style="left:27px;top:494px;width:287px;height:20px;background:#ffe699"></div>
<div class="a" style="left:27px;top:515px;width:287px;height:20px;background:#ffe699"></div>
<div class="a" style="left:27px;top:536px;width:287px;height:20px;background:#ffe699"></div>
<div class="a" style="left:27px;top:557px;width:287px;height:20px;background:#ffe699"></div>
<div class="a" style="left:27px;top:578px;width:287px;height:20px;background:#ffe699"></div>
<div class="a" style="left:27px;top:599px;width:287px;height:20px;background:#ffe699"></div>
<div class="a" style="left:27px;top:620px;width:287px;height:20px;background:#ffe699"></div>
<div class="a" style="left:27px;top:641px;width:287px;height:20px;background:#ffe699"></div>
<div class="a" style="left:27px;top:241px;width:775px;height:1px;background:#000"></div>
<div class="a" style="left:27px;top:262px;width:775px;height:1px;background:#000"></div>
<div class="a" style="left:27px;top:283px;width:775px;height:1px;background:#000"></div>
<div class="a" style="left:27px;top:304px;width:775px;height:1px;background:#000"></div>
<div class="a" style="left:27px;top:325px;width:775px;height:1px;background:#000"></div>
<div class="a" style="left:27px;top:346px;width:775px;height:1px;background:#000"></div>
<div class="a" style="left:27px;top:367px;width:775px;height:1px;background:#000"></div>
<div class="a" style="left:27px;top:388px;width:775px;height:1px;background:#000"></div>
<div class="a" style="left:27px;top:409px;width:775px;height:1px;background:#000"></div>
<div class="a" style="left:27px;top:430px;width:775px;height:1px;background:#000"></div>
<div class="a" style="left:27px;top:451px;width:775px;height:1px;background:#000"></div>
<div class="a" style="left:27px;top:472px;width:775px;height:1px;background:#000"></div>
<div class="a" style="left:27px;top:493px;width:775px;height:1px;background:#000"></div>
<div class="a" style="left:27px;top:514px;width:775px;height:1px;background:#000"></div>
<div class="a" style="left:27px;top:535px;width:775px;height:1px;background:#000"></div>
<div class="a" style="left:27px;top:556px;width:775px;height:1px;background:#000"></div>
<div class="a" style="left:27px;top:577px;width:775px;height:1px;background:#000"></div>
<div class="a" style="left:27px;top:598px;width:775px;height:1px;background:#000"></div>
<div class="a" style="left:27px;top:619px;width:775px;height:1px;background:#000"></div>
<div class="a" style="left:27px;top:640px;width:775px;height:1px;background:#000"></div>
<div class="a" style="left:27px;top:661px;width:775px;height:1px;background:#000"></div>
<div class="a" style="left:314px;top:221px;width:1px;height:441px;background:#000"></div>
<div class="a" style="left:414px;top:221px;width:1px;height:441px;background:#000"></div>
<div class="a" style="left:512px;top:221px;width:1px;height:441px;background:#000"></div>
<div class="a" style="left:620px;top:221px;width:1px;height:441px;background:#000"></div>
<div class="a" style="left:721px;top:221px;width:1px;height:441px;background:#000"></div>
<div class="a" style="left:801px;top:221px;width:1px;height:441px;background:#000"></div>
<div class="cell" style="left:29.5px;width:268px;top:221.5px;font-weight:bold"><span class="sb">Наименование</span></div>
<div class="cell" style="left:278px;width:100px;text-align:right;top:221.5px;font-weight:bold"><span class="sbr">Пол</span></div>
<div class="cell" style="left:424px;width:72px;top:221.5px;font-weight:bold"><span class="sb">Вид спорта</span></div>
<div class="cell" style="left:520px;width:84px;top:221.5px;font-weight:bold"><span class="sb">Продано, шт</span></div>
<div class="cell" style="left:603px;width:100px;text-align:right;top:221.5px;font-weight:bold"><span class="sbr">Цена, руб</span></div>
<div class="cell" style="left:704px;width:78px;text-align:right;top:221.5px;font-weight:bold"><span class="sbr">Итого</span></div>
<div class="cell" style="left:29.5px;top:242.5px;width:284px"><span class="sl">Кроссовки беговые, размер 38</span></div>
<div class="cell" style="left:512px;width:106px;text-align:right;top:242.5px"><span class="sr">222</span></div>
<div class="cell" style="left:620px;width:99px;text-align:right;top:242.5px"><span class="sr">3 190</span></div>
<div class="cell" style="left:721px;width:78px;text-align:right;top:242.5px"><span class="sr">704 990</span></div>
<div class="cell" style="left:29.5px;top:263.5px;width:284px"><span class="sl">Кроссовки беговые, размер 39</span></div>
<div class="cell" style="left:512px;width:106px;text-align:right;top:263.5px"><span class="sr">444</span></div>
<div class="cell" style="left:620px;width:99px;text-align:right;top:263.5px"><span class="sr">6 990</span></div>
<div class="cell" style="left:721px;width:78px;text-align:right;top:263.5px"><span class="sr">2 796 000</span></div>
<div class="cell" style="left:29.5px;top:284.5px;width:284px"><span class="sl">Кроссовки для баскетбола, размер 40</span></div>
<div class="cell" style="left:512px;width:106px;text-align:right;top:284.5px"><span class="sr">98</span></div>
<div class="cell" style="left:620px;width:99px;text-align:right;top:284.5px"><span class="sr">5 990</span></div>
<div class="cell" style="left:721px;width:78px;text-align:right;top:284.5px"><span class="sr">587 020</span></div>
<div class="cell" style="left:29.5px;top:305.5px;width:284px"><span class="sl">Кроссовки для баскетбола, размер 41</span></div>
<div class="cell" style="left:512px;width:106px;text-align:right;top:305.5px"><span class="sr">334</span></div>
<div class="cell" style="left:620px;width:99px;text-align:right;top:305.5px"><span class="sr">5 890</span></div>
<div class="cell" style="left:721px;width:78px;text-align:right;top:305.5px"><span class="sr">1 967 260</span></div>
<div class="cell" style="left:29.5px;top:326.5px;width:284px"><span class="sl">Кроссовки беговые, размер 40</span></div>
<div class="cell" style="left:512px;width:106px;text-align:right;top:326.5px"><span class="sr">321</span></div>
<div class="cell" style="left:620px;width:99px;text-align:right;top:326.5px"><span class="sr">6 490</span></div>
<div class="cell" style="left:721px;width:78px;text-align:right;top:326.5px"><span class="sr">2 083 290</span></div>
<div class="cell" style="left:29.5px;top:347.5px;width:284px"><span class="sl">Кроссовки беговые, размер 41</span></div>
<div class="cell" style="left:512px;width:106px;text-align:right;top:347.5px"><span class="sr">500</span></div>
<div class="cell" style="left:620px;width:99px;text-align:right;top:347.5px"><span class="sr">6 990</span></div>
<div class="cell" style="left:721px;width:78px;text-align:right;top:347.5px"><span class="sr">3 495 000</span></div>
<div class="cell" style="left:29.5px;top:368.5px;width:284px"><span class="sl">Кроссовки беговые, размер 42</span></div>
<div class="cell" style="left:512px;width:106px;text-align:right;top:368.5px"><span class="sr">581</span></div>
<div class="cell" style="left:620px;width:99px;text-align:right;top:368.5px"><span class="sr">7 990</span></div>
<div class="cell" style="left:721px;width:78px;text-align:right;top:368.5px"><span class="sr">4 641 360</span></div>
<div class="cell" style="left:29.5px;top:389.5px;width:284px"><span class="sl">Кроссовки теннисные, размер 40</span></div>
<div class="cell" style="left:512px;width:106px;text-align:right;top:389.5px"><span class="sr">553</span></div>
<div class="cell" style="left:620px;width:99px;text-align:right;top:389.5px"><span class="sr">7 990</span></div>
<div class="cell" style="left:721px;width:78px;text-align:right;top:389.5px"><span class="sr">4 418 470</span></div>
<div class="cell" style="left:29.5px;top:410.5px;width:284px"><span class="sl">Кроссовки теннисные, размер 41</span></div>
<div class="cell" style="left:512px;width:106px;text-align:right;top:410.5px"><span class="sr">123</span></div>
<div class="cell" style="left:620px;width:99px;text-align:right;top:410.5px"><span class="sr">7 990</span></div>
<div class="cell" style="left:721px;width:78px;text-align:right;top:410.5px"><span class="sr">982 770</span></div>
<div class="cell" style="left:29.5px;top:431.5px;width:284px"><span class="sl">Кроссовки беговые, размер 43</span></div>
<div class="cell" style="left:512px;width:106px;text-align:right;top:431.5px"><span class="sr">330</span></div>
<div class="cell" style="left:620px;width:99px;text-align:right;top:431.5px"><span class="sr">7 990</span></div>
<div class="cell" style="left:721px;width:78px;text-align:right;top:431.5px"><span class="sr">2 334 660</span></div>
<div class="cell" style="left:29.5px;top:452.5px;width:284px"><span class="sl">Кроссовки беговые, размер 44</span></div>
<div class="cell" style="left:512px;width:106px;text-align:right;top:452.5px"><span class="sr">259</span></div>
<div class="cell" style="left:620px;width:99px;text-align:right;top:452.5px"><span class="sr">5 990</span></div>
<div class="cell" style="left:721px;width:78px;text-align:right;top:452.5px"><span class="sr">1 551 780</span></div>
<div class="cell" style="left:29.5px;top:473.5px;width:284px"><span class="sl">Кроссовки беговые, размер 45</span></div>
<div class="cell" style="left:512px;width:106px;text-align:right;top:473.5px"><span class="sr">258</span></div>
<div class="cell" style="left:620px;width:99px;text-align:right;top:473.5px"><span class="sr">5 990</span></div>
<div class="cell" style="left:721px;width:78px;text-align:right;top:473.5px"><span class="sr">1 544 790</span></div>
<div class="cell" style="left:29.5px;top:494.5px;width:284px"><span class="sl">Кроссовки теннисные, размер 42</span></div>
<div class="cell" style="left:512px;width:106px;text-align:right;top:494.5px"><span class="sr">443</span></div>
<div class="cell" style="left:620px;width:99px;text-align:right;top:494.5px"><span class="sr">7 990</span></div>
<div class="cell" style="left:721px;width:78px;text-align:right;top:494.5px"><span class="sr">3 539 570</span></div>
<div class="cell" style="left:29.5px;top:515.5px;width:284px"><span class="sl">Кроссовки беговые, размер 37</span></div>
<div class="cell" style="left:512px;width:106px;text-align:right;top:515.5px"><span class="sr">181</span></div>
<div class="cell" style="left:620px;width:99px;text-align:right;top:515.5px"><span class="sr">8 990</span></div>
<div class="cell" style="left:721px;width:78px;text-align:right;top:515.5px"><span class="sr">1 564 090</span></div>
<div class="cell" style="left:29.5px;top:536.5px;width:284px"><span class="sl">Кроссовки теннисные, размер 43</span></div>
<div class="cell" style="left:512px;width:106px;text-align:right;top:536.5px"><span class="sr">543</span></div>
<div class="cell" style="left:620px;width:99px;text-align:right;top:536.5px"><span class="sr">7 990</span></div>
<div class="cell" style="left:721px;width:78px;text-align:right;top:536.5px"><span class="sr">4 338 570</span></div>
<div class="cell" style="left:29.5px;top:557.5px;width:284px"><span class="sl">Кроссовки беговые, размер 36</span></div>
<div class="cell" style="left:512px;width:106px;text-align:right;top:557.5px"><span class="sr">332</span></div>
<div class="cell" style="left:620px;width:99px;text-align:right;top:557.5px"><span class="sr">6 490</span></div>
<div class="cell" style="left:721px;width:78px;text-align:right;top:557.5px"><span class="sr">2 154 680</span></div>
<div class="cell" style="left:29.5px;top:578.5px;width:284px"><span class="sl">Кроссовки беговые, размер 35</span></div>
<div class="cell" style="left:512px;width:106px;text-align:right;top:578.5px"><span class="sr">333</span></div>
<div class="cell" style="left:620px;width:99px;text-align:right;top:578.5px"><span class="sr">6 490</span></div>
<div class="cell" style="left:721px;width:78px;text-align:right;top:578.5px"><span class="sr">2 161 170</span></div>
<div class="cell" style="left:29.5px;top:599.5px;width:284px"><span class="sl">Кроссовки беговые, размер 34</span></div>
<div class="cell" style="left:512px;width:106px;text-align:right;top:599.5px"><span class="sr">421</span></div>
<div class="cell" style="left:620px;width:99px;text-align:right;top:599.5px"><span class="sr">6 490</span></div>
<div class="cell" style="left:721px;width:78px;text-align:right;top:599.5px"><span class="sr">2 732 290</span></div>
<div class="cell" style="left:29.5px;top:620.5px;width:284px"><span class="sl">Кроссовки беговые, размер 33</span></div>
<div class="cell" style="left:512px;width:106px;text-align:right;top:620.5px"><span class="sr">220</span></div>
<div class="cell" style="left:620px;width:99px;text-align:right;top:620.5px"><span class="sr">6 990</span></div>
<div class="cell" style="left:721px;width:78px;text-align:right;top:620.5px"><span class="sr">1 537 800</span></div>
<div class="cell" style="left:29.5px;top:641.5px;width:284px"><span class="sl">Кроссовки теннисные, размер 39</span></div>
<div class="cell" style="left:512px;width:106px;text-align:right;top:641.5px"><span class="sr">554</span></div>
<div class="cell" style="left:620px;width:99px;text-align:right;top:641.5px"><span class="sr">7 990</span></div>
<div class="cell" style="left:721px;width:78px;text-align:right;top:641.5px"><span class="sr">4 426 460</span></div>
<div class="cell" style="left:314px;width:100px;text-align:center;top:641.5px"><span class="sl" style="transform-origin:50% 50%">женский</span></div>
<div class="cell" style="left:414px;width:98px;text-align:center;top:641.5px"><span class="sl" style="transform-origin:50% 50%">теннис</span></div>
<div class="cell" style="left:314px;width:100px;text-align:center;top:620.5px"><span class="sl" style="transform-origin:50% 50%">женский</span></div>
<div class="a" style="left:297px;top:223px;width:17px;height:17px;background:linear-gradient(#fdfdfd,#ebeef2);border:1px solid #b4b4b4;border-bottom-color:#a3a8ae"></div>
<div class="a" style="left:301.5px;top:229.5px;width:0;height:0;border-left:4px solid transparent;border-right:4px solid transparent;border-top:4.5px solid #595959"></div>
<div class="a" style="left:397px;top:223px;width:17px;height:17px;background:linear-gradient(#fdfdfd,#ebeef2);border:1px solid #b4b4b4;border-bottom-color:#a3a8ae"></div>
<div class="a" style="left:401.5px;top:229.5px;width:0;height:0;border-left:4px solid transparent;border-right:4px solid transparent;border-top:4.5px solid #595959"></div>
<div class="a" style="left:495px;top:223px;width:17px;height:17px;background:linear-gradient(#fdfdfd,#ebeef2);border:1px solid #b4b4b4;border-bottom-color:#a3a8ae"></div>
<div class="a" style="left:499.5px;top:229.5px;width:0;height:0;border-left:4px solid transparent;border-right:4px solid transparent;border-top:4.5px solid #595959"></div>
<div class="a" style="left:603px;top:223px;width:17px;height:17px;background:linear-gradient(#fdfdfd,#ebeef2);border:1px solid #b4b4b4;border-bottom-color:#a3a8ae"></div>
<div class="a" style="left:607.5px;top:229.5px;width:0;height:0;border-left:4px solid transparent;border-right:4px solid transparent;border-top:4.5px solid #595959"></div>
<div class="a" style="left:704px;top:223px;width:17px;height:17px;background:linear-gradient(#fdfdfd,#ebeef2);border:1px solid #b4b4b4;border-bottom-color:#a3a8ae"></div>
<div class="a" style="left:708.5px;top:229.5px;width:0;height:0;border-left:4px solid transparent;border-right:4px solid transparent;border-top:4.5px solid #595959"></div>
<div class="a" style="left:784px;top:223px;width:17px;height:17px;background:linear-gradient(#fdfdfd,#ebeef2);border:1px solid #b4b4b4;border-bottom-color:#a3a8ae"></div>
<div class="a" style="left:788.5px;top:229.5px;width:0;height:0;border-left:4px solid transparent;border-right:4px solid transparent;border-top:4.5px solid #595959"></div>
<div class="a" style="left:1071px;top:200px;width:18px;height:463px;background:#e6e6e6"></div>
<div class="a" style="left:1074px;top:202px;width:15px;height:15px;background:#fff;border:1px solid #c6c6c6"></div>
<svg class="a" style="left:1078px;top:207px" width="8" height="5" viewBox="0 0 8 5"><path d="M0 4.5H8L4 0Z" fill="#6d6d6d"/></svg>
<div class="a" style="left:1074px;top:218px;width:15px;height:431px;background:#fff;border:1px solid #c6c6c6"></div>
<div class="a" style="left:1074px;top:649px;width:15px;height:14px;background:#fff;border:1px solid #c6c6c6"></div>
<svg class="a" style="left:1078px;top:654px" width="8" height="4.5" viewBox="0 0 8 4.5"><path d="M0 0H8L4.0 4.5Z" fill="#6d6d6d"/></svg>
<div class="a" style="left:0;top:663px;width:1090px;height:28px;background:#e6e6e6;border-top:1px solid #c6c6c6"></div>
<svg class="a" style="left:24px;top:675px" width="5" height="9" viewBox="0 0 5 9"><path d="M4 0V8L0 4Z" fill="#c0c0c0"/></svg>
<svg class="a" style="left:53px;top:675px" width="5" height="9" viewBox="0 0 5 9"><path d="M0 0V8L4 4Z" fill="#c0c0c0"/></svg>
<div class="a" style="left:98px;top:662px;width:107px;height:26px;background:#fff;border-left:1px solid #c6c6c6;border-right:1px solid #c6c6c6;border-bottom:2px solid #217346"></div>
<div class="t" style="left:110.50px;top:670.30px;font-size:13px;line-height:13px;color:#217346;font-weight:bold;transform:scaleX(0.9723);transform-origin:0 0;">microexcel.ru</div>
<svg class="a" style="left:237px;top:669px" width="18" height="17" viewBox="0 0 18 17"><circle cx="8.7" cy="8.3" r="7.3" fill="none" stroke="#7a7a7a" stroke-width="1.3"/><path d="M8.7 4.3V12.3M4.7 8.3H12.7" stroke="#7a7a7a" stroke-width="1.6"/></svg>
<div class="a" style="left:654px;top:673px;width:2px;height:2px;background:#b0b0b0"></div>
<div class="a" style="left:654px;top:677px;width:2px;height:2px;background:#b0b0b0"></div>
<div class="a" style="left:654px;top:681px;width:2px;height:2px;background:#b0b0b0"></div>
<div class="a" style="left:671px;top:670px;width:400px;height:15px;background:#dcdcdc;border:1px solid #c6c6c6"></div>
<div class="a" style="left:671px;top:670px;width:16px;height:15px;background:#fff;border:1px solid #c6c6c6"></div>
<svg class="a" style="left:676px;top:674px" width="5" height="8" viewBox="0 0 5 8"><path d="M4 0V7L0 3.5Z" fill="#555"/></svg>
<div class="a" style="left:686px;top:670px;width:328px;height:15px;background:#fff;border:1px solid #c6c6c6"></div>
<div class="a" style="left:1056px;top:670px;width:15px;height:15px;background:#fff;border:1px solid #c6c6c6"></div>
<svg class="a" style="left:1061px;top:674px" width="5" height="8" viewBox="0 0 5 8"><path d="M0 0V7L4 3.5Z" fill="#555"/></svg>
<div class="a" style="left:0;top:691px;width:1090px;height:21px;background:#f3f3f3;border-top:1px solid #d5d5d5"></div>
<svg class="a" style="left:5px;top:694px" width="15" height="14" viewBox="0 0 15 14"><circle cx="3.5" cy="3.5" r="3" fill="#6d6d6d"/><path d="M5 5.5H14V13.5H2V7.5" fill="none" stroke="#6d6d6d" stroke-width="1"/><path d="M2 9.5H14M2 11.5H14M5.5 6V13.5M9 6V13.5M11.5 6V13.5" stroke="#6d6d6d" stroke-width="0.8"/></svg>
<div class="a" style="left:792px;top:691px;width:38px;height:20px;background:#c8c8c8"></div>
<svg class="a" style="left:804px;top:694px" width="13" height="14" viewBox="0 0 13 14"><path d="M0.5 0.5H12.5V13H0.5Z M0.5 4.5H12.5M0.5 8.7H12.5M4.5 0.5V13M8.5 0.5V13" fill="none" stroke="#6d6d6d" stroke-width="1"/></svg>
<svg class="a" style="left:841px;top:694px" width="15" height="14" viewBox="0 0 15 14"><path d="M0.5 0.5H14.5V13.5H0.5Z" fill="none" stroke="#6d6d6d" stroke-width="1"/><path d="M3.5 3H11.5V11H3.5Z M5 5.2H10M5 7H10M5 8.8H10" fill="none" stroke="#6d6d6d" stroke-width="0.9"/></svg>
<svg class="a" style="left:879px;top:694px" width="15" height="14" viewBox="0 0 15 14"><path d="M0.5 0.5H14.5V13.5H0.5Z M0.5 9H7.5V0.5M4 0.5V6.5" fill="none" stroke="#6d6d6d" stroke-width="1"/></svg>
<div class="a" style="left:910px;top:701px;width:7px;height:2px;background:#444"></div>
<div class="a" style="left:921px;top:702px;width:100px;height:1px;background:#a6a6a6"></div>
<div class="a" style="left:968.5px;top:696px;width:5px;height:11px;background:#6d6d6d"></div>
<div class="a" style="left:1024px;top:701px;width:8px;height:2px;background:#444"></div>
<div class="a" style="left:1027px;top:698px;width:2px;height:8px;background:#444"></div>
<div class="t" style="left:1043.60px;top:696.29px;font-size:11px;line-height:11px;color:#262626;transform:scaleX(0.9331);transform-origin:0 0;">100 %</div>
<div class="a" style="left:230px;top:240px;width:282px;height:399px;background:#fff;border:1px solid #c6c6c6;box-shadow:2px 2px 3px rgba(0,0,0,.18)"></div>
<div class="t" style="left:236.70px;top:244.13px;font-size:10px;line-height:10px;color:#1e73be;font-weight:bold;transform:scaleX(0.9141);transform-origin:0 0;">A</div>
<div class="t" style="left:237.00px;top:251.74px;font-size:10px;line-height:10px;color:#8c54a8;font-weight:bold;transform:scaleX(0.8762);transform-origin:0 0;">Я</div>
<svg class="a" style="left:243px;top:245px" width="8" height="15" viewBox="0 0 8 15"><path d="M4 0V14M1 10.5L4 14L7 10.5" fill="none" stroke="#6d6d6d" stroke-width="1.1"/></svg>
<div class="t" style="left:237.00px;top:268.14px;font-size:10px;line-height:10px;color:#8c54a8;font-weight:bold;transform:scaleX(0.8762);transform-origin:0 0;">Я</div>
<div class="t" style="left:236.70px;top:275.64px;font-size:10px;line-height:10px;color:#1e73be;font-weight:bold;transform:scaleX(0.9141);transform-origin:0 0;">A</div>
<svg class="a" style="left:243px;top:269px" width="8" height="15" viewBox="0 0 8 15"><path d="M4 0V14M1 10.5L4 14L7 10.5" fill="none" stroke="#6d6d6d" stroke-width="1.1"/></svg>
<div class="t" style="left:263.20px;top:247.19px;font-size:12.3px;line-height:12.3px;color:#444;transform:scaleX(0.9463);transform-origin:0 0;">Сортировка от <u>А</u> до Я</div>
<div class="t" style="left:263.20px;top:271.19px;font-size:12.3px;line-height:12.3px;color:#444;transform:scaleX(0.9463);transform-origin:0 0;">Сортировка от <u>Я</u> до А</div>
<div class="t" style="left:263.20px;top:294.89px;font-size:12.3px;line-height:12.3px;color:#444;transform:scaleX(0.9687);transform-origin:0 0;"><u>С</u>ортировка по цвету</div>
<svg class="a" style="left:498px;top:297px" width="5" height="9" viewBox="0 0 5 9"><path d="M0 0V8L4 4Z" fill="#6d6d6d"/></svg>
<div class="a" style="left:263px;top:313px;width:248px;height:1px;background:#e3e3e3"></div>
<svg class="a" style="left:235px;top:319px" width="17" height="16" viewBox="0 0 17 16"><path d="M1 1H12L8 5.5V11L5 9V5.5Z" fill="#bdbdbd"/><path d="M8 9L15 15.5M15 9L8 15.5" stroke="#bdbdbd" stroke-width="1.5"/></svg>
<div class="t" style="left:263.20px;top:320.19px;font-size:12.3px;line-height:12.3px;color:#a6a6a6;transform:scaleX(0.9565);transform-origin:0 0;"><u>У</u>далить фильтр из столбца &quot;Вид спорта&quot;</div>
<div class="t" style="left:263.20px;top:344.09px;font-size:12.3px;line-height:12.3px;color:#a6a6a6;transform:scaleX(0.9716);transform-origin:0 0;"><u>Ф</u>ильтр по цвету</div>
<svg class="a" style="left:498px;top:347px" width="5" height="9" viewBox="0 0 5 9"><path d="M0 0V8L4 4Z" fill="#c6c6c6"/></svg>
<div class="a" style="left:232px;top:363px;width:278px;height:24px;background:#c8c8c8"></div>
<div class="t" style="left:263.20px;top:369.29px;font-size:12.3px;line-height:12.3px;color:#262626;transform:scaleX(0.9542);transform-origin:0 0;">Текстовые <u>ф</u>ильтры</div>
<svg class="a" style="left:498px;top:370.5px" width="5" height="9" viewBox="0 0 5 9"><path d="M0 0V8L4 4Z" fill="#6d6d6d"/></svg>
<div class="a" style="left:261px;top:393px;width:244px;height:20px;background:#fff;border:1px solid #ababab"></div>
<div class="t" style="left:263.50px;top:395.59px;font-size:12.3px;line-height:12.3px;color:#6d6d6d;transform:scaleX(1.0071);transform-origin:0 0;">Поиск</div>
<svg class="a" style="left:487px;top:395px" width="14" height="15" viewBox="0 0 14 15"><circle cx="8.3" cy="5.5" r="3.8" fill="none" stroke="#1e73be" stroke-width="1.6"/><path d="M5.5 8.3L1.5 12.5" stroke="#1e73be" stroke-width="2" stroke-linecap="round"/></svg>
<div class="a" style="left:261px;top:415px;width:244px;height:170px;background:#fff;border:1px solid #dde3ea"></div>
<div class="a" style="left:274px;top:426px;width:1px;height:57px;border-left:1px dotted #8a8a8a"></div>
<div class="a" style="left:275px;top:426px;width:9px;height:1px;border-top:1px dotted #8a8a8a"></div>
<svg class="a" style="left:283px;top:419px" width="13" height="13" viewBox="0 0 13 13"><path d="M1.5 1.5H11.5V11.5H1.5Z" fill="#fff" stroke="#333" stroke-width="1"/><path d="M3.5 6.3L5.6 8.8L9.5 3.5" fill="none" stroke="#000" stroke-width="1.7"/></svg>
<div class="t" style="left:298.60px;top:420.19px;font-size:12.3px;line-height:12.3px;color:#000;transform:scaleX(0.9198);transform-origin:0 0;">(Выделить все)</div>
<div class="a" style="left:275px;top:444px;width:9px;height:1px;border-top:1px dotted #8a8a8a"></div>
<svg class="a" style="left:283px;top:437px" width="13" height="13" viewBox="0 0 13 13"><path d="M1.5 1.5H11.5V11.5H1.5Z" fill="#fff" stroke="#333" stroke-width="1"/><path d="M3.5 6.3L5.6 8.8L9.5 3.5" fill="none" stroke="#000" stroke-width="1.7"/></svg>
<div class="t" style="left:298.60px;top:437.69px;font-size:12.3px;line-height:12.3px;color:#000;transform:scaleX(0.9599);transform-origin:0 0;">баскетбол</div>
<div class="a" style="left:275px;top:462px;width:9px;height:1px;border-top:1px dotted #8a8a8a"></div>
<svg class="a" style="left:283px;top:455px" width="13" height="13" viewBox="0 0 13 13"><path d="M1.5 1.5H11.5V11.5H1.5Z" fill="#fff" stroke="#333" stroke-width="1"/><path d="M3.5 6.3L5.6 8.8L9.5 3.5" fill="none" stroke="#000" stroke-width="1.7"/></svg>
<div class="t" style="left:298.60px;top:455.19px;font-size:12.3px;line-height:12.3px;color:#000;transform:scaleX(0.9381);transform-origin:0 0;">бег</div>
<div class="a" style="left:275px;top:480px;width:9px;height:1px;border-top:1px dotted #8a8a8a"></div>
<svg class="a" style="left:283px;top:473px" width="13" height="13" viewBox="0 0 13 13"><path d="M1.5 1.5H11.5V11.5H1.5Z" fill="#fff" stroke="#333" stroke-width="1"/><path d="M3.5 6.3L5.6 8.8L9.5 3.5" fill="none" stroke="#000" stroke-width="1.7"/></svg>
<div class="t" style="left:298.60px;top:473.49px;font-size:12.3px;line-height:12.3px;color:#000;transform:scaleX(0.9450);transform-origin:0 0;">теннис</div>
<div class="a" style="left:347px;top:600px;width:73px;height:21px;background:#e1e1e1;border:1px solid #adadad"></div>
<div class="t" style="left:376.60px;top:604.69px;font-size:12.3px;line-height:12.3px;color:#000;transform:scaleX(0.8728);transform-origin:0 0;">ОК</div>
<div class="a" style="left:431px;top:600px;width:73px;height:21px;background:#e1e1e1;border:1px solid #adadad"></div>
<div class="t" style="left:447.50px;top:604.69px;font-size:12.3px;line-height:12.3px;color:#000;transform:scaleX(0.9061);transform-origin:0 0;">Отмена</div>
<div class="a" style="left:231px;top:625px;width:280px;height:1px;background:#e3eef5"></div>
<div class="a" style="left:506px;top:628px;width:2px;height:2px;background:#9a9a9a"></div>
<div class="a" style="left:503px;top:631px;width:2px;height:2px;background:#9a9a9a"></div>
<div class="a" style="left:506px;top:631px;width:2px;height:2px;background:#9a9a9a"></div>
<div class="a" style="left:230px;top:361px;width:280px;height:29px;border:3px solid #f00;border-radius:10px"></div>
<div class="a" style="left:511px;top:363px;width:201px;height:177px;background:#fff;border:1px solid #c6c6c6;box-shadow:2px 2px 3px rgba(0,0,0,.18)"></div>
<div class="t" style="left:545.50px;top:370.99px;font-size:12.3px;line-height:12.3px;color:#444;transform:scaleX(0.9189);transform-origin:0 0;"><u>Р</u>авно...</div>
<div class="t" style="left:545.50px;top:394.69px;font-size:12.3px;line-height:12.3px;color:#444;transform:scaleX(0.9329);transform-origin:0 0;"><u>Н</u>е равно...</div>
<div class="t" style="left:545.50px;top:421.49px;font-size:12.3px;line-height:12.3px;color:#444;transform:scaleX(0.9457);transform-origin:0 0;"><u>Н</u>ачинается с...</div>
<div class="t" style="left:545.50px;top:444.19px;font-size:12.3px;line-height:12.3px;color:#444;transform:scaleX(0.9401);transform-origin:0 0;"><u>З</u>аканчивается на...</div>
<div class="t" style="left:545.50px;top:470.89px;font-size:12.3px;line-height:12.3px;color:#444;transform:scaleX(0.9632);transform-origin:0 0;"><u>С</u>одержит...</div>
<div class="t" style="left:545.50px;top:495.49px;font-size:12.3px;line-height:12.3px;color:#444;transform:scaleX(0.9638);transform-origin:0 0;"><u>Н</u>е содержит...</div>
<div class="t" style="left:545.50px;top:520.79px;font-size:12.3px;line-height:12.3px;color:#444;transform:scaleX(0.9550);transform-origin:0 0;">Настраиваемый <u>ф</u>ильтр...</div>
<div class="a" style="left:545px;top:413px;width:164px;height:1px;background:#e3e3e3"></div>
<div class="a" style="left:545px;top:463px;width:164px;height:1px;background:#e3e3e3"></div>
<div class="a" style="left:545px;top:514px;width:164px;height:1px;background:#e3e3e3"></div>
<div class="a" style="left:514px;top:361px;width:196px;height:152px;border:3px solid #f00;border-radius:10px"></div>
<div class="a" style="left:384px;top:214px;width:39px;height:34px;border:3px solid #f00;border-radius:9px"></div>
<div class="a" style="left:0;top:61px;width:1px;height:651px;background:#00753f"></div>
<div class="a" style="left:1089px;top:61px;width:1px;height:651px;background:#00753f"></div>
<div class="a" style="left:0;top:711px;width:1090px;height:1px;background:#00753f"></div>
</body></html>
